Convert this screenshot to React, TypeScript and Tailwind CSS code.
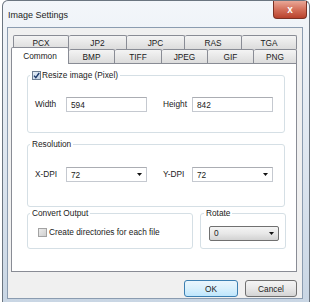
import React from "react";

const font = { fontFamily: '"Liberation Sans", Arial, sans-serif' };

function Arrow() {
  return (
    <svg width="5" height="3" viewBox="0 0 5 3" className="shrink-0">
      <polygon points="0,0 5,0 2.5,3" fill="#111" />
    </svg>
  );
}

function Tab({ label, w, first }: { label: string; w: string; first?: boolean }) {
  return (
    <div
      className={`${w} h-[14px] flex items-center justify-center border-t border-r ${
        first ? "border-l" : ""
      } border-[#898c95] rounded-t-[2px] bg-gradient-to-b from-[#f4f4f4] to-[#dcdcdc] text-[8.3px] leading-[10px] text-[#1a1a1a]`}
    >
      {label}
    </div>
  );
}

function TextBox({ value }: { value: string }) {
  return (
    <div className="w-[81px] h-[15px] flex items-center pl-[4px] border border-[#c5c9d0] border-t-[#abadb3] bg-white text-[8.3px] leading-[10px] text-[#222]">
      {value}
    </div>
  );
}

function Combo({ value }: { value: string }) {
  return (
    <div className="w-[81px] h-[15px] flex items-center justify-between pl-[4px] pr-[4px] border border-[#c5c9d0] border-t-[#abadb3] bg-white text-[8.3px] leading-[10px] text-[#222]">
      <span>{value}</span>
      <Arrow />
    </div>
  );
}

export default function App() {
  return (
    <div className="w-[310px] h-[302px] bg-white overflow-hidden" style={font}>
      <div className="ml-[2px] w-[308px] h-[302px] flex flex-col border-l border-r border-t border-[#6b7580] rounded-t-[6px] bg-gradient-to-b from-[#f3f6fa] via-[#dfe7f0] to-[#c9d6e4]">
        {/* title bar */}
        <div className="h-[26px] flex items-start justify-between">
          <div className="pl-[5px] pt-[9px] text-[9px] leading-[11px] text-[#1c1c1c]">Image Settings</div>
          <div className="mr-[2px] w-[34px] h-[18px] flex items-center justify-center rounded-b-[4px] border border-t-0 border-[#7a3124] bg-gradient-to-b from-[#e9a797] via-[#d4705b] to-[#b8412c] text-white text-[10px] font-bold leading-[10px]">
            x
          </div>
        </div>
        {/* client */}
        <div className="pl-[4px] pr-[6px]">
          <div className="w-[296px] h-[272px] border border-[#8b9cb0] bg-[#f0f0f0] pl-[3px] pt-[7px]">
            {/* tabs row 1 */}
            <div className="flex ml-[2px]">
              <Tab label="PCX" w="w-[56px]" first />
              <Tab label="JP2" w="w-[58px]" />
              <Tab label="JPC" w="w-[58px]" />
              <Tab label="RAS" w="w-[57px]" />
              <Tab label="TGA" w="w-[55px]" />
            </div>
            {/* tabs row 2 */}
            <div className="flex items-start h-[14px]">
              <div className="relative z-10 w-[58px] h-[17px] -mt-[2px] flex items-center justify-center border border-b-0 border-[#898c95] rounded-t-[2px] bg-white text-[8.3px] leading-[10px] text-[#1a1a1a]">
                Common
              </div>
              <Tab label="BMP" w="w-[46px]" />
              <Tab label="TIFF" w="w-[47px]" />
              <Tab label="JPEG" w="w-[46px]" />
              <Tab label="GIF" w="w-[46px]" />
              <Tab label="PNG" w="w-[43px]" />
            </div>
            {/* panel */}
            <div className="w-[286px] h-[209px] border border-[#898c95] bg-white pt-[6px] text-[8.3px] leading-[11px] text-[#222]">
              {/* group 1 */}
              <fieldset className="ml-[15px] w-[258px] border border-[#d5dfe5] rounded-[3px] pb-[20px]">
                <legend className="ml-[2px] px-[2px] leading-[11px]">
                  <span className="flex items-center gap-[1px]">
                    <span className="w-[9px] h-[9px] border border-[#6f7f93] bg-gradient-to-br from-[#e6eef7] to-[#c3d3e4] flex items-center justify-center">
                      <svg width="7" height="7" viewBox="0 0 7 7">
                        <path d="M1 3.6 L2.8 5.6 L6.2 1" stroke="#1d3a6b" strokeWidth="1.4" fill="none" />
                      </svg>
                    </span>
                    <span>Resize image (Pixel)</span>
                  </span>
                </legend>
                <div className="mt-[16px] flex items-center pl-[7px]">
                  <span className="w-[31px]">Width</span>
                  <TextBox value="594" />
                  <span className="ml-[16px] w-[29px]">Height</span>
                  <TextBox value="842" />
                </div>
              </fieldset>
              {/* group 2 */}
              <fieldset className="mt-[6px] ml-[15px] w-[258px] border border-[#d5dfe5] rounded-[3px] pb-[24px]">
                <legend className="ml-[2px] px-[2px] leading-[11px]">Resolution</legend>
                <div className="mt-[17px] flex items-center pl-[7px]">
                  <span className="w-[31px]">X-DPI</span>
                  <Combo value="72" />
                  <span className="ml-[16px] w-[29px]">Y-DPI</span>
                  <Combo value="72" />
                </div>
              </fieldset>
              {/* group 3 row */}
              <div className="mt-[1px] ml-[15px] flex items-start">
                <fieldset className="w-[166px] border border-[#d5dfe5] rounded-[3px] pb-[10px]">
                  <legend className="ml-[2px] px-[2px] leading-[11px]">Convert Output</legend>
                  <div className="mt-[8px] h-[11px] flex items-center pl-[10px] gap-[2px]">
                    <span className="w-[9px] h-[9px] border border-[#a3a3a3] bg-gradient-to-br from-[#ececec] to-[#cfcfcf]" />
                    <span>Create directories for each file</span>
                  </div>
                </fieldset>
                <fieldset className="ml-[7px] w-[86px] border border-[#d5dfe5] rounded-[3px] pb-[7px]">
                  <legend className="ml-[3px] px-[2px] leading-[11px]">Rotate</legend>
                  <div className="mt-[7px] ml-[8px] w-[70px] h-[15px] flex items-center justify-between pl-[4px] pr-[4px] border border-[#707070] rounded-[2px] bg-gradient-to-b from-[#f4f4f4] via-[#e8e8e8] to-[#d2d2d2]">
                    <span>0</span>
                    <Arrow />
                  </div>
                </fieldset>
              </div>
            </div>
            {/* buttons */}
            <div className="w-[286px] mt-[8px] flex justify-end gap-[7px] text-[8.3px] leading-[10px] text-[#1a1a1a]">
              <div className="w-[54px] h-[17px] flex items-center justify-center border border-[#3c7fb1] rounded-[3px] bg-gradient-to-b from-[#eaf6fd] via-[#d9f0fc] to-[#bee6fd]">
                OK
              </div>
              <div className="w-[52px] h-[17px] flex items-center justify-center border border-[#707070] rounded-[3px] bg-gradient-to-b from-[#f4f4f4] via-[#e8e8e8] to-[#d4d4d4]">
                Cancel
              </div>
            </div>
          </div>
        </div>
      </div>
    </div>
  );
}
